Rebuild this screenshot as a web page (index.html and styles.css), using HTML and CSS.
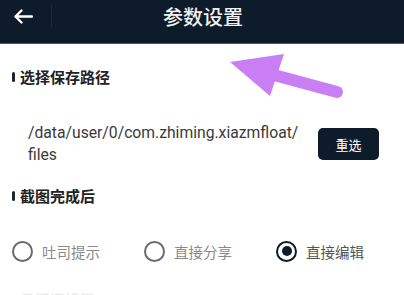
FILE: index.html
```html
<!DOCTYPE html>
<html lang="zh">
<head>
    <meta charset="UTF-8">
    <meta name="viewport" content="width=device-width, initial-scale=1.0">
    <title>参数设置</title>
    <link rel="stylesheet" href="styles.css">
</head>
<body>

<header class="topbar">
    <div class="back">
        <svg width="20" height="15" viewBox="0 0 20 15">
            <path d="M19 7.5H2.5M8.5 1.5L2.5 7.5L8.5 13.5" fill="none" stroke="#fff" stroke-width="2.4" stroke-linecap="round" stroke-linejoin="round"/>
        </svg>
    </div>
    <div class="divider"></div>
    <h1>参数设置</h1>
</header>

<div class="content">
    <!-- 保存路径 -->
    <h2 class="section-title">选择保存路径</h2>
    <div class="path-row">
        <p class="path">/data/user/0/com.zhiming.xiazmfloat/<br>files</p>
        <button class="btn">重选</button>
    </div>

    <!-- 截图完成后 -->
    <h2 class="section-title second">截图完成后</h2>
    <div class="radio-row">
        <label class="radio"><span class="dot"></span>吐司提示</label>
        <label class="radio"><span class="dot"></span>直接分享</label>
        <label class="radio checked"><span class="dot"></span>直接编辑</label>
    </div>

    <h2 class="section-title third">悬浮窗设置</h2>
</div>

<svg class="pointer" width="404" height="295" viewBox="0 0 404 295">
    <line x1="274" y1="75" x2="337" y2="92" stroke="#c97ef4" stroke-width="12" stroke-linecap="round"/>
    <polygon points="230,62 284,54 270,96" fill="#c97ef4"/>
</svg>

</body>
</html>
```

FILE: styles.css
```css
body {
    margin: 0;
    background: #fff;
    font-family: Roboto, "Noto Sans CJK SC", sans-serif;
    color: #333;
    width: 404px;
    height: 295px;
    overflow: hidden;
    position: relative;
}
.topbar {
    height: 43px;
    background-color: #0e1b2b;
    border-bottom: 1px solid #4a5562;
    display: flex;
    align-items: center;
    position: relative;
}
.back {
    width: 51px;
    display: flex;
    align-items: center;
    padding-left: 13px;
    box-sizing: border-box;
    margin-top: -10px;
}
.divider {
    width: 1px;
    height: 22px;
    background: #1d2a39;
    margin-top: -11px;
}
.topbar h1 {
    position: absolute;
    left: 0;
    right: 0;
    top: 5px;
    margin: 0;
    text-align: center;
    color: #f2f2f2;
    font-size: 20px;
    font-weight: 500;
    line-height: 24px;
    font-family: "Noto Sans CJK SC", sans-serif;
    padding-left: 2px;
}
.content {
    padding: 0 12px;
}
.section-title {
    margin: 23px 0 0;
    font-size: 15px;
    line-height: 20px;
    font-weight: bold;
    color: #222;
    font-family: "Noto Sans CJK SC", sans-serif;
    display: flex;
    align-items: center;
}
.section-title::before {
    content: "";
    width: 3px;
    height: 10px;
    border-radius: 1.5px;
    background: #1a2533;
    margin-right: 5px;
}
.section-title.second {
    margin-top: 20px;
}
.section-title.third {
    margin-top: 28px;
    color: #ececec;
}
.section-title.third::before {
    background: #ececec;
}
.path-row {
    display: flex;
    align-items: center;
    justify-content: space-between;
    margin-top: 35px;
    padding-left: 16px;
    padding-right: 13px;
}
.path {
    margin: 0;
    font-size: 15.7px;
    line-height: 22px;
    color: #3a3a3a;
}
.btn {
    width: 61px;
    height: 32px;
    border: none;
    border-radius: 5px;
    background-color: #0e1b2b;
    color: #fff;
    font-size: 13px;
    font-family: "Noto Sans CJK SC", sans-serif;
    padding: 0;
}
.radio-row {
    display: flex;
    margin-top: 34px;
    height: 22px;
    align-items: center;
}
.radio {
    display: flex;
    align-items: center;
    gap: 9px;
    width: 132px;
    flex-shrink: 0;
    white-space: nowrap;
    font-size: 14.5px;
    color: #8a8a8a;
    font-family: "Noto Sans CJK SC", sans-serif;
}
.dot {
    width: 21px;
    height: 21px;
    box-sizing: border-box;
    border: 2.5px solid #6a6a6a;
    border-radius: 50%;
    display: flex;
    align-items: center;
    justify-content: center;
}
.radio.checked {
    color: #555;
}
.radio.checked .dot {
    border-color: #0e1b2b;
}
.radio.checked .dot::after {
    content: "";
    width: 10px;
    height: 10px;
    border-radius: 50%;
    background: #0e1b2b;
}
.pointer {
    position: absolute;
    left: 0;
    top: 0;
}
```
